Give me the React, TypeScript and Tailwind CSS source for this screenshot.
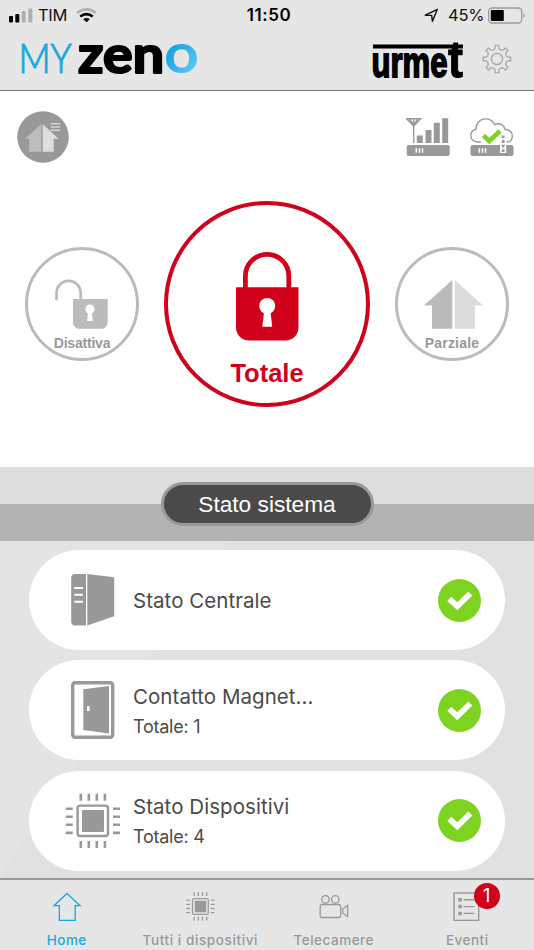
import React from 'react'

interface SectionCardProps {
    title: string
    subtitle?: string
    icon: React.ReactNode
}

interface TabProps {
    label: string
    icon: React.ReactNode
    labelClass: string
    active?: boolean
    badge?: number
}

const gearPath = () => {
    const points: string[] = []
    const add = (radius: number, degrees: number) => {
        const angle = (degrees * Math.PI) / 180
        points.push(`${(15 + radius * Math.sin(angle)).toFixed(2)} ${(15 - radius * Math.cos(angle)).toFixed(2)}`)
    }
    for (let i = 0; i < 8; i++) {
        const a = i * 45
        add(10.2, a - 14)
        add(11.4, a - 9)
        add(13.9, a - 8)
        add(13.9, a + 8)
        add(11.4, a + 9)
        add(10.2, a + 14)
        add(9.9, a + 22.5)
    }
    return `M${points.join('L')}Z`
}

const StatusBar: React.FC = () => (
    <div className="relative flex h-[30px] items-center justify-between pl-[9px] pr-[8px]">
        <div className="flex items-center">
            <svg width="24" height="15" viewBox="0 0 24 15">
                <rect x="0" y="8" width="4" height="6.5" rx="1" fill="#000" />
                <rect x="6.3" y="6" width="4" height="8.5" rx="1" fill="#000" />
                <rect x="12.7" y="3" width="4" height="11.5" rx="1" fill="#b0b0b0" />
                <rect x="19.3" y="0.5" width="4" height="14" rx="1" fill="#b0b0b0" />
            </svg>
            <span className="ml-[5px] w-[38px] text-[16.5px] leading-[30px] tracking-[-0.3px]">TIM</span>
            <svg width="21" height="15" viewBox="0 0 21 15" fill="none">
                <path d="M1.2 5.2A13.2 13.2 0 0 1 19.8 5.2" stroke="#b0b0b0" strokeWidth="2.6" />
                <path d="M4.3 8.6A8.8 8.8 0 0 1 16.7 8.6" stroke="#000" strokeWidth="2.7" />
                <path d="M10.5 14.2L7.3 11.2A4.6 4.6 0 0 1 13.7 11.2Z" fill="#000" />
            </svg>
        </div>
        <div className="flex items-center">
            <svg width="15" height="15" viewBox="0 0 15 15" fill="none">
                <path d="M1.3 7.2L13.3 1.3L8.4 13.4L7.7 7.4Z" stroke="#111" strokeWidth="1.4" strokeLinejoin="round" />
            </svg>
            <span className="ml-[9px] w-[40px] text-[16.5px] leading-[30px] tracking-[-0.2px]">45%</span>
            <svg width="38" height="17" viewBox="0 0 38 17">
                <rect x="0.7" y="1" width="33" height="15" rx="3.5" fill="none" stroke="#9a9a9a" strokeWidth="1.3" />
                <rect x="2.8" y="3" width="13" height="11" rx="1" fill="#000" />
                <path d="M35.4 6A3 3 0 0 1 35.4 11Z" fill="#9a9a9a" />
            </svg>
        </div>
        <span className="absolute left-[269px] top-0 -translate-x-1/2 text-[17px] font-semibold leading-[30px] tracking-[0.6px] text-black">11:50</span>
    </div>
)

const Header: React.FC = () => (
    <header className="h-[91px] border-b border-[#777] bg-[#e6e6e6]">
        <StatusBar />
        <div className="flex items-center justify-between pl-[20px] pr-[22px]">
            <svg className="overflow-visible" width="180" height="58" viewBox="20 30 180 58">
                <defs>
                    <linearGradient id="ring" x1="0" y1="0" x2="0.7" y2="1">
                        <stop offset="0.45" stopColor="#1ba7e2" />
                        <stop offset="1" stopColor="#6ccbf5" />
                    </linearGradient>
                </defs>
                <text x="18.5" y="73" textLength="53" lengthAdjust="spacingAndGlyphs" fontFamily="Lato" fontWeight="300" fontSize="40.5" fill="#1ba7e2" stroke="#1ba7e2" strokeWidth="1.1">MY</text>
                <text x="78" y="72.6" textLength="86" lengthAdjust="spacingAndGlyphs" fontFamily="Lato" fontWeight="700" fontSize="51" fill="#000" stroke="#000" strokeWidth="2.2" strokeLinejoin="round">zen</text>
                <text x="164" y="73.2" textLength="35" lengthAdjust="spacingAndGlyphs" fontFamily="Lato" fontWeight="700" fontSize="56" fill="url(#ring)">o</text>
            </svg>
            <div className="flex items-center">
                <svg className="overflow-visible" width="94" height="58" viewBox="371 30 94 58">
                    <rect x="373" y="44.5" width="90" height="4" fill="#000" />
                    <text x="371.5" y="76.7" textLength="76" lengthAdjust="spacingAndGlyphs" fontFamily="'Liberation Sans Narrow', 'Liberation Sans'" fontWeight="700" fontSize="43" fill="#000" stroke="#000" strokeWidth="1.8">urme</text>
                    <text x="448" y="76.7" textLength="15" lengthAdjust="spacingAndGlyphs" fontFamily="'Liberation Sans Narrow', 'Liberation Sans'" fontWeight="700" fontSize="52" fill="#000" stroke="#000" strokeWidth="1">t</text>
                </svg>
                <svg className="ml-[17px]" width="30" height="30" viewBox="0 0 30 30" fill="none" stroke="#a3a3a3" strokeWidth="1.2" strokeLinejoin="round">
                    <path d={gearPath()} />
                    <circle cx="15" cy="15" r="5.6" />
                </svg>
            </div>
        </div>
    </header>
)

const StatusIcons: React.FC = () => (
    <div className="flex items-center justify-between pl-[17px] pr-[20.5px]">
        <svg width="52" height="52" viewBox="17 111 52 52">
            <circle cx="43" cy="137" r="25.8" fill="#999" />
            <path d="M41.3 124V151.7H29.2V138.7H25Z" fill="#bdbdbd" />
            <path d="M42.7 124V151.7H53.7V138.7H58.5Z" fill="#ddd" />
            <path d="M50.7 123.7H60M50.7 127H60M50.7 130.3H60" stroke="#d5d5d5" strokeWidth="1.5" />
        </svg>
        <div className="flex gap-[20px]">
            <svg width="44" height="40" viewBox="405.5 117 44 40">
                <path d="M406 118.8H420.3L413.2 126ZM413.2 119V143M409 119L413.2 125L417.3 119" fill="none" stroke="#999" strokeWidth="1.4" />
                <path d="M416.3 135.5H422.3V143H416.3ZM425 130H431V143H425ZM433.3 122.7H439.3V143H433.3ZM441.7 118.3H447.7V143H441.7Z" fill="#999" />
                <rect x="406.2" y="145" width="43" height="11" rx="2" fill="#999" />
                <path d="M415.8 148.2V152.8M419 148.2V152.8M422 148.2V152.8" stroke="#fff" strokeWidth="1.5" />
            </svg>
            <svg width="44" height="40" viewBox="469.5 117 44 40">
                <path d="M480.5 142H477.5C472.5 142 470 138.5 470.3 135.2C470.6 131.5 473.2 129.6 475.5 129.3C475 123.5 479.3 119 485 118.9C489.5 118.9 492.4 121.3 494 124.5C499 122.3 503.5 125 504.5 129.3C509.5 130 512 133 511.8 136.5C511.5 140 509 142 506 142" fill="none" stroke="#999" strokeWidth="1.4" />
                <rect x="470" y="145" width="43" height="11" rx="2" fill="#999" />
                <path d="M478.9 148.2V152.8M482 148.2V152.8M485 148.2V152.8" stroke="#fff" strokeWidth="1.5" />
                <path d="M482.8 135.5L488.8 141L499.5 131" fill="none" stroke="#7ed321" strokeWidth="4.6" />
                <path d="M499.5 134H505.7V153H499.5Z" fill="#fff" />
                <path d="M502.6 135.5V152" stroke="#999" strokeWidth="2.8" strokeDasharray="2.8 1.8" />
            </svg>
        </div>
    </div>
)

const ModeSelector: React.FC = () => (
    <div className="mt-[38px] flex items-center justify-between px-[25px]">
        <button className="flex h-[114px] w-[114px] flex-col items-center rounded-full border-[3px] border-[#bbb] pt-[29px]">
            <svg width="54" height="50" viewBox="30 32 54 50">
                <path d="M31.5 53.3V46A12.1 12.1 0 0 1 55.7 46V54" fill="none" stroke="#bbb" strokeWidth="2.7" />
                <path d="M48 52H82.7V75.5A6.3 6.3 0 0 1 76.4 81.8H54.3A6.3 6.3 0 0 1 48 75.5Z" fill="#bbb" />
                <circle cx="64.9" cy="62" r="4.6" fill="#fff" />
                <path d="M63.2 64H66.6L67.8 74H62Z" fill="#fff" />
            </svg>
            <span className="mt-[4px] font-['Liberation_Sans',sans-serif] text-[14px] font-bold leading-[20px] tracking-[-0.2px] text-[#999]">Disattiva</span>
        </button>
        <button className="flex h-[206px] w-[206px] flex-col items-center rounded-full border-4 border-[#d0021b] pt-[46px]">
            <svg width="64" height="90" viewBox="71 50 64 90">
                <path d="M81.4 88V75A21.7 21.7 0 0 1 124.8 75V88" fill="none" stroke="#d0021b" strokeWidth="4.8" />
                <path d="M72 86.3H134.5V126.5A13 13 0 0 1 121.5 139.5H85A13 13 0 0 1 72 126.5Z" fill="#d0021b" />
                <circle cx="103.2" cy="105" r="8" fill="#fff" />
                <path d="M100.2 110H106.4L108.2 125.8H98.3Z" fill="#fff" />
            </svg>
            <span className="mt-[17px] font-['Liberation_Sans',sans-serif] text-[25.5px] font-bold leading-[30px] text-[#d0021b]">Totale</span>
        </button>
        <button className="flex h-[114px] w-[114px] flex-col items-center rounded-full border-[3px] border-[#bbb] pt-[29px]">
            <svg width="62" height="50" viewBox="26 32 62 50">
                <path d="M57.3 33V81.8H37V58.5H29Z" fill="#bbb" />
                <path d="M59.8 33V81.8H80V58.5H88Z" fill="#dcdcdc" />
            </svg>
            <span className="mt-[4px] font-['Liberation_Sans',sans-serif] text-[14px] font-bold leading-[20px] tracking-[0.2px] text-[#999]">Parziale</span>
        </button>
    </div>
)

const CheckBadge: React.FC = () => (
    <svg className="ml-auto mr-[24px] shrink-0" width="43" height="43" viewBox="0 0 43 43">
        <circle cx="21.5" cy="21.5" r="21.5" fill="#7ed321" />
        <path d="M11.3 19.8L19.3 27.2L32.3 14.5" fill="none" stroke="#fff" strokeWidth="5.8" />
    </svg>
)

const ServerIcon: React.FC = () => (
    <svg width="56" height="60" viewBox="65 570 56 60">
        <path d="M86 574V625.5H75A4 4 0 0 1 71.2 621.7V578A4 4 0 0 1 75 574Z" fill="#999" />
        <path d="M87.3 574L114.2 577.2V616.3L87.3 625.5Z" fill="#999" />
        <path d="M74.3 588H83M74.3 594.8H83M74.3 601.8H83" stroke="#fff" strokeWidth="2" />
    </svg>
)

const DoorIcon: React.FC = () => (
    <svg width="56" height="60" viewBox="65 680 56 60">
        <rect x="72.7" y="682.8" width="40" height="54.4" rx="2.5" fill="none" stroke="#999" strokeWidth="3.4" />
        <path d="M83.3 689.3L109 686V733.5L83.3 730Z" fill="#999" />
        <rect x="87" y="706" width="2.6" height="5" rx="0.6" fill="#fff" />
    </svg>
)

const ChipIcon: React.FC<{ size: number }> = ({ size }) => (
    <svg width={size} height={size} viewBox="0 0 56 56">
        <rect x="12.6" y="12.6" width="30.4" height="30.4" rx="2.5" fill="none" stroke="#999" strokeWidth="2.4" />
        <rect x="17" y="17" width="22" height="22" rx="1" fill="#999" />
        {[15.8, 23.8, 31.8, 39.9].map((p) => (
            <path key={p} d={`M${p} 0.7V7.7M${p} 48V55M0.7 ${p}H7.7M48 ${p}H55`} stroke="#999" strokeWidth="2.6" />
        ))}
    </svg>
)

const SectionCard: React.FC<SectionCardProps> = ({ title, subtitle, icon }) => (
    <div className="flex h-[100px] shrink-0 items-center rounded-full bg-white pl-[36px] text-[#4a4a4a]">
        <div className="w-[56px]">{icon}</div>
        <div className="ml-[12px] flex flex-col pt-[2.4px]">
            <span className="text-[20.5px] leading-[28px] tracking-[0.05px]">{title}</span>
            {subtitle && <span className="mt-[3px] text-[18px] leading-[26px] tracking-[-0.25px]">{subtitle}</span>}
        </div>
        <CheckBadge />
    </div>
)

const Tab: React.FC<TabProps> = ({ label, icon, labelClass, active, badge }) => (
    <div className={`relative flex flex-1 flex-col items-center pt-[9px] ${active ? 'text-[#14a9de]' : 'text-[#999]'}`}>
        <div className="flex h-[34px] items-center">{icon}</div>
        <span className={`mt-[8px] text-[13.5px] font-medium leading-[18px] ${labelClass}`}>{label}</span>
        {badge && (
            <span className="absolute left-[73px] top-[3px] flex h-[26px] w-[26px] items-center justify-center rounded-full bg-[#d0021b] text-[19px] text-white">{badge}</span>
        )}
    </div>
)

const TabBar: React.FC = () => (
    <nav className="flex h-[72px] border-t-[2px] border-[#999] bg-[#e6e6e6]">
        <Tab
            active
            label="Home"
            labelClass="tracking-[0.5px]"
            icon={
                <svg width="30" height="30" viewBox="52 891 30 30" fill="none" stroke="currentColor" strokeWidth="1.3">
                    <path d="M67 893.5L80 905.7H75.2V920.3H59.3V905.7H54Z" />
                </svg>
            }
        />
        <Tab label="Tutti i dispositivi" labelClass="tracking-[0.6px]" icon={<ChipIcon size={29} />} />
        <Tab
            label="Telecamere"
            labelClass="tracking-[0.5px]"
            icon={
                <svg width="30" height="30" viewBox="319 891 30 30" fill="none" stroke="currentColor" strokeWidth="1.3">
                    <circle cx="325.4" cy="899.4" r="3.7" />
                    <circle cx="335.3" cy="899.4" r="3.7" />
                    <rect x="320.2" y="904.5" width="20.5" height="13" rx="2" />
                    <path d="M347.6 905.3V916.7L342.7 913V909Z" />
                </svg>
            }
        />
        <Tab
            label="Eventi"
            labelClass="tracking-[0.5px]"
            badge={1}
            icon={
                <svg width="30" height="30" viewBox="452 891 30 30" fill="none" stroke="currentColor" strokeWidth="1.4">
                    <rect x="454" y="893" width="24.7" height="27.4" />
                    <path d="M463.5 899.8H474.3M463.5 906.6H474.3M463.5 913.4H474.3" />
                    <path d="M458.3 899.8H461.8M458.3 906.6H461.8M458.3 913.4H461.8" strokeWidth="3.5" />
                </svg>
            }
        />
    </nav>
)

const App: React.FC = () => (
    <div className="flex h-[950px] w-[534px] flex-col overflow-hidden bg-white font-['Inter',sans-serif] text-[#111]">
        <Header />
        <main className="h-[376px] pt-[20px]">
            <StatusIcons />
            <ModeSelector />
        </main>
        <div className="flex h-[74px] items-center justify-center bg-linear-to-b from-[#ddd] from-50% to-[#b3b3b3] to-50%">
            <div className="flex h-[44px] w-[213px] items-center justify-center rounded-full border-[3px] border-[#999] bg-[#4a4a4a] font-['Liberation_Sans',sans-serif] text-[22.7px] text-white">
                Stato sistema
            </div>
        </div>
        <section className="relative h-[337px] overflow-hidden bg-[#e1e1e1]">
            <div className="absolute inset-0 bg-[#e4e4e4] [clip-path:polygon(0_0,228px_0,155px_109px,80px_219px,20px_305px,0_337px)]" />
            <div className="relative flex flex-col gap-[10.4px] px-[29px] pt-[9px]">
                <SectionCard title="Stato Centrale" icon={<ServerIcon />} />
                <SectionCard title="Contatto Magnet..." subtitle="Totale: 1" icon={<DoorIcon />} />
                <SectionCard title="Stato Dispositivi" subtitle="Totale: 4" icon={<ChipIcon size={56} />} />
            </div>
        </section>
        <TabBar />
    </div>
)

export default App
